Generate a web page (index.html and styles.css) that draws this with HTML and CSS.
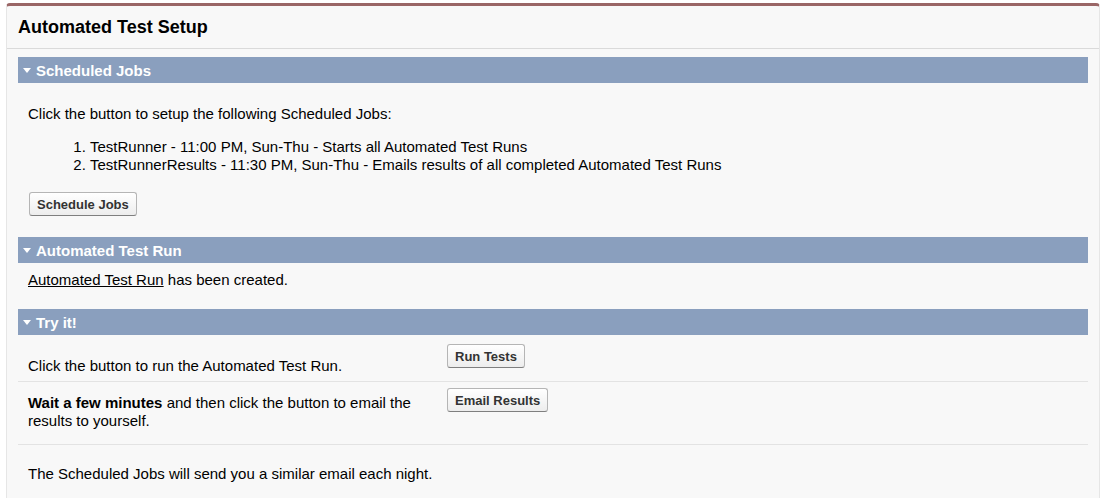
FILE: index.html
```html
<!DOCTYPE html>
<html>
<head>
<meta charset="utf-8">
<link rel="stylesheet" href="styles.css">
</head>
<body>
<div class="panel">
  <div class="panel-head"><h2 class="title">Automated Test Setup</h2></div>
  <div class="panel-body">
    <div class="sec-bar"><span class="arrow"></span>Scheduled Jobs</div>
    <div class="sec-body sec-jobs">
      <p class="intro">Click the button to setup the following Scheduled Jobs:</p>
      <ol class="jobs">
        <li>TestRunner - 11:00 PM, Sun-Thu - Starts all Automated Test Runs</li>
        <li>TestRunnerResults - 11:30 PM, Sun-Thu - Emails results of all completed Automated Test Runs</li>
      </ol>
      <button class="btn">Schedule Jobs</button>
    </div>

    <div class="sec-bar"><span class="arrow"></span>Automated Test Run</div>
    <div class="sec-body sec-run">
      <a class="link" href="#">Automated Test Run</a> has been created.
    </div>

    <div class="sec-bar"><span class="arrow"></span>Try it!</div>
    <div class="rows">
      <div class="row row1">
        <div class="label">Click the button to run the Automated Test Run.</div>
        <div class="action"><button class="btn">Run Tests</button></div>
      </div>
      <div class="row row2">
        <div class="label"><b>Wait a few minutes</b> and then click the button to email the results to yourself.</div>
        <div class="action"><button class="btn">Email Results</button></div>
      </div>
      <div class="row row3">
        <div class="label">The Scheduled Jobs will send you a similar email each night.</div>
      </div>
    </div>
  </div>
</div>
</body>
</html>
```

FILE: styles.css
```css
html, body {
  margin: 0;
  padding: 0;
  background: #ffffff;
}
body {
  font-family: "Liberation Sans", Arial, sans-serif;
  font-size: 15px;
  color: #000;
  padding: 3px 5px 0 6px;
}
.panel {
  background: #f8f8f8;
  border-top: 3px solid #9a6666;
  border-left: 1px solid #e6e6e6;
  border-right: 1px solid #e6e6e6;
  border-radius: 4px 4px 0 0;
  height: 495px;
  box-sizing: border-box;
}
.panel-head {
  height: 42px;
  border-bottom: 1px solid #dadada;
  display: flex;
  align-items: center;
  padding-left: 11px;
}
.title {
  margin: 0;
  font-size: 18px;
  font-weight: bold;
  color: #000;
}
.panel-body {
  padding: 8px 11px 0 11px;
}
.sec-bar {
  height: 26px;
  background: #8a9fbe;
  color: #fff;
  font-weight: bold;
  font-size: 15px;
  display: flex;
  align-items: center;
  padding-left: 5px;
}
.arrow {
  width: 0;
  height: 0;
  border-left: 4px solid transparent;
  border-right: 4px solid transparent;
  border-top: 5px solid #fff;
  margin-right: 5px;
  margin-top: 1px;
}
.sec-body {
  padding-left: 10px;
  line-height: 18px;
}
.sec-jobs {
  padding-top: 22px;
  padding-bottom: 21px;
}
.intro {
  margin: 0 0 15px 0;
}
.jobs {
  margin: 0 0 18px 0;
  padding-left: 62px;
}
.btn {
  display: block;
  height: 24px;
  box-sizing: border-box;
  padding: 0 7px;
  font-family: "Liberation Sans", Arial, sans-serif;
  font-size: 13px;
  font-weight: bold;
  color: #333;
  background: linear-gradient(#ffffff, #ededed);
  border: 1px solid #b5b5b5;
  border-bottom-color: #7f7f7f;
  border-radius: 3px;
  margin-left: 1px;
}
.sec-run {
  padding-top: 8px;
  padding-bottom: 20px;
}
.link {
  color: #000;
  text-decoration: underline;
}
.rows {
  line-height: 18px;
}
.row {
  display: grid;
  grid-template-columns: 400px 1fr;
  column-gap: 18px;
  padding-left: 10px;
  border-bottom: 1px solid #e3e3e3;
}
.row3 {
  border-bottom: none;
}
.row1 .label {
  padding: 22px 0 6px;
}
.row1 .action {
  padding-top: 9px;
}
.row2 .label {
  padding: 12px 0 14px;
}
.row2 .action {
  padding-top: 6px;
}
.row3 .label {
  padding-top: 20px;
  grid-column: 1 / 3;
}
```
